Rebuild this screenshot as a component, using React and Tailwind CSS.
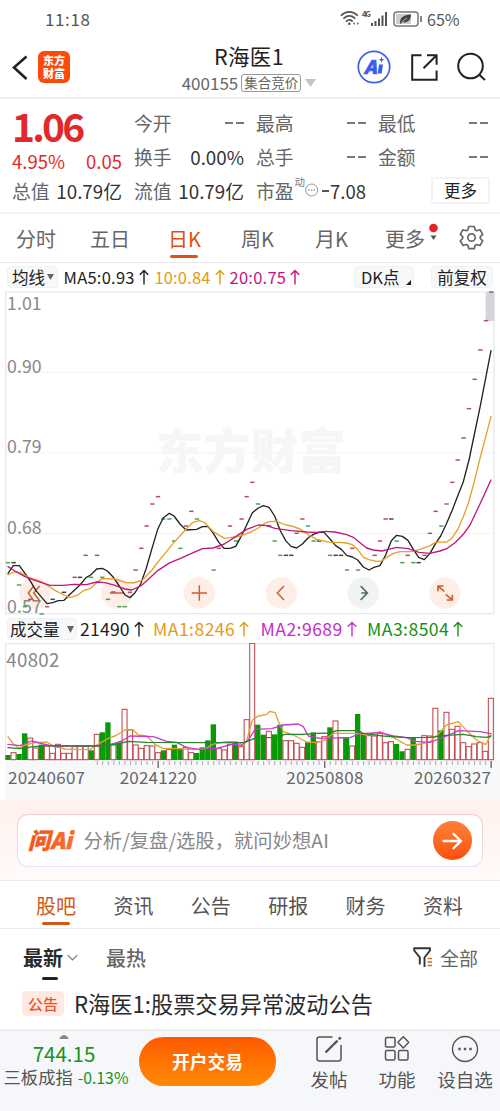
import React from "react";

/* Chart data is expressed in thirds of a pixel: x 0..1500 spans the full width. */
const STEP = 16.65;
const VOLUME =
  "g436 r428 g433 g371 r384 r414 g405 r408 r430 r403 r430 r430 r410 r408 r408 g422 r373 g368 g338 r405 g400 r298 r359 r405 r415 r407 r408 r428 g422 r419 g405 g418 r412 r428 g430 g413 g392 g344 r415 r420 r403 g397 r410 r329 r100 g345 g375 r364 g374 g345 r392 r392 r400 r412 g398 g368 r395 r380 g353 r333 r383 g383 r408 g313 g372 r377 r378 r370 r398 r395 g403 g425 r418 g383 r403 r377 r378 r295 g362 r307 r358 r349 r398 r410 r402 r398 r424 r265"
    .split(" ")
    .map((s) => ({ up: s[0] === "r", top: Number(s.slice(1)) }));

const MA5 =
  "24,280 40,257 58,257 75,280 92,305 108,332 125,352 141,371 158,368 175,362 192,361 210,343 240,315 258,293 272,285 290,267 307,265 322,273 340,292 358,318 375,345 390,353 405,338 422,312 438,267 456,205 473,148 490,113 508,100 522,108 540,132 558,150 590,148 607,140 624,139 640,160 657,188 672,205 690,205 707,199 722,172 740,135 757,98 775,84 790,77 807,82 824,108 840,150 857,182 873,199 890,204 907,192 924,174 940,163 957,157 972,157 990,177 1007,197 1024,208 1040,226 1057,231 1073,240 1090,261 1107,270 1122,262 1140,257 1157,225 1174,182 1190,166 1207,169 1224,181 1240,208 1256,232 1273,239 1290,220 1307,190 1322,168 1340,130 1357,90 1373,48 1390,5 1407,-60 1440,-218 1473,-388";
const MA10 =
  "24,285 40,276 60,277 90,294 108,300 125,306 145,318 165,331 192,345 210,352 230,347 250,332 272,325 290,308 307,296 345,297 375,307 400,309 428,300 456,270 473,247 500,214 522,187 556,150 577,128 598,122 613,127 640,155 673,175 690,173 720,168 750,157 775,144 790,133 807,125 830,124 857,135 875,138 900,147 925,164 950,178 990,187 1020,187 1040,189 1057,194 1073,208 1090,232 1107,239 1130,244 1145,243 1160,232 1180,220 1200,215 1235,215 1260,208 1290,197 1307,187 1340,186 1357,173 1375,145 1390,110 1405,70 1422,8 1440,-65 1473,-190";
const MA20 =
  "24,260 45,273 75,290 105,301 150,316 190,316 220,313 260,314 290,306 315,308 345,316 375,327 395,330 425,316 445,298 473,272 510,248 540,236 575,220 607,206 640,204 673,192 707,170 740,148 775,135 800,137 825,145 873,152 920,156 950,157 975,154 1005,156 1040,164 1060,172 1080,188 1100,204 1120,210 1145,213 1165,208 1190,202 1225,206 1257,217 1290,220 1320,213 1342,205 1365,188 1390,163 1410,135 1440,72 1473,0";
const DASHES =
  "g24,248 d41,248 g57,315 g75,380 g125,402 r91,358 r141,380 d158,358 d192,337 r224,292 d240,292 r257,226 g273,292 r291,226 g307,292 g324,358 r340,336 g358,380 g374,380 r390,337 r407,270 r424,205 r440,138 r457,72 r474,50 g490,117 g508,117 g522,183 g541,205 r558,138 r574,94 g591,117 g641,270 r657,205 r690,138 g708,183 r725,117 r740,50 r757,7 g774,72 d807,138 g824,183 g841,226 d858,226 d874,226 r890,160 r907,117 g924,138 g941,183 d957,183 g990,226 d1007,226 d1023,226 g1041,270 r1057,205 g1074,270 r1124,226 r1140,183 r1157,117 d1174,117 g1190,183 g1207,248 r1223,226 g1240,248 d1256,248 r1274,226 r1290,160 r1307,94 g1324,138 r1340,72 r1357,7 r1373,-60 r1391,-126 r1407,-214 r1424,-302 r1441,-390 r1458,-478 r1474,-564"
    .split(" ")
    .map((s) => {
      const [x, y] = s.slice(1).split(",").map(Number);
      return { c: { g: "#4aa552", r: "#b05060", d: "#444" }[s[0]], x, y };
    });
const VMA1 =
  "24,380 40,402 57,415 75,405 105,398 140,396 165,410 195,417 240,419 272,418 290,405 325,385 345,378 375,360 400,360 415,375 440,378 465,403 490,416 530,415 580,419 615,417 640,402 680,395 710,395 730,405 740,392 757,330 775,318 800,313 810,304 825,308 840,345 850,365 880,375 920,396 950,398 975,390 1000,370 1070,370 1100,375 1140,365 1180,382 1220,405 1250,405 1290,395 1315,372 1340,345 1375,335 1400,362 1430,390 1457,404 1473,375";
const VMA2 =
  "24,403 60,407 95,393 130,402 165,410 230,408 300,408 340,402 365,393 390,378 460,380 500,394 530,397 560,413 600,418 650,415 700,402 725,406 745,390 765,358 815,356 850,345 895,342 910,350 925,378 960,385 1050,383 1080,371 1140,368 1180,378 1220,383 1245,394 1290,397 1340,378 1375,362 1440,365 1473,371";
const VMA3 =
  "24,413 60,416 100,410 150,407 290,408 350,402 385,394 440,397 650,398 730,398 770,383 830,382 855,373 910,373 950,370 990,369 1010,362 1075,362 1090,370 1150,378 1220,383 1290,382 1340,376 1390,373 1430,380 1460,382 1473,378";

function Line({ points, color, w = 4 }) {
  return <polyline points={points} fill="none" stroke={color} strokeWidth={w} strokeLinejoin="round" strokeLinecap="round" />;
}

function StatusBar() {
  return (
    <div className="flex h-[38px] items-center pb-px pl-[45px] pr-[41px] text-[#555]">
      <span className="text-[17px] leading-none tracking-[0.6px]">11:18</span>
      <div className="ml-auto flex items-center">
        <svg width="20" height="17" viewBox="0 0 20 17" fill="none" stroke="#555" strokeWidth="1.8" strokeLinecap="round">
          <path d="M1.5 5.2C6 .8 12.6.8 17.2 5.2M4 8.2c3.2-3 7.500-3 10.700 0M6.500 11.200c1.700-1.600 4-1.600 5.600-.2" />
          <circle cx="9.300" cy="13.800" r="1.300" fill="#555" stroke="none" />
          <path d="M13 13.500l1.700-1.500v3zM19 13.500l-1.700-1.500v3z" fill="#555" stroke="none" />
        </svg>
        <svg className="ml-[2px] overflow-visible" width="26" height="17" viewBox="0 0 26 17" fill="#555">
          <text x="0" y="7" fontSize="8" fontWeight="700" textLength="9">4G</text>
          <path d="M9 13h2v3H9zM12.500 11h2v5h-2zM16 8.500h2V16h-2zM19.500 5.500h2V16h-2zM23 2h2v14h-2z" />
        </svg>
        <svg className="ml-[5px]" width="30" height="16" viewBox="0 0 30 16">
          <rect x="1" y="1" width="24" height="14" rx="3" fill="#fff" stroke="#777" strokeWidth="1.500" />
          <path d="M3 3h15v10H3z" fill="#ccc" />
          <path d="M7 12c0-6 4-8 11-8.500 0 6-4 9-8.500 7.500L7.500 13z" fill="#444" />
          <path d="M9 11l5-4" stroke="#ddd" strokeWidth=".8" />
          <path d="M28 5v6" stroke="#777" strokeWidth="1.800" />
        </svg>
        <span className="ml-[4px] w-[32px] whitespace-nowrap text-[16px] leading-none">65%</span>
      </div>
    </div>
  );
}

function Header() {
  return (
    <div className="flex h-[61px] items-start border-b-2 border-[#efefef] pl-[12px]">
      <svg className="mt-[17px]" width="16" height="25" viewBox="0 0 16 25" fill="none" stroke="#222" strokeWidth="2.600">
        <path d="M14.500 1.500L2 12.500l12.500 11.500" />
      </svg>
      <div className="ml-[10px] mt-[13px] flex h-[32px] w-[32px] flex-col items-center justify-center rounded-[6px] bg-[#fb4a0c] text-[11px] font-black leading-[13.500px] text-white">
        <span>东方</span>
        <span>财富</span>
      </div>
      <div className="ml-[107px] flex w-[144px] flex-col items-center">
        <div className="mt-[6px] whitespace-nowrap text-[21.500px] leading-[24px] tracking-[0.400px] text-[#222]">R海医1</div>
        <div className="mt-[5px] flex items-center whitespace-nowrap leading-none text-[#666]">
          <span className="text-[17px] leading-[20px]">400155</span>
          <span className="ml-[3px] flex h-[18px] items-center rounded-[3px] border border-[#999] px-[2px] text-[13.500px]">集合竞价</span>
          <svg className="ml-[4px]" width="11" height="8" viewBox="0 0 11 8"><path d="M0 0h11L5.500 8z" fill="#c4c4c4" /></svg>
        </div>
      </div>
      <svg className="ml-[36px] mt-[12px]" width="34" height="34" viewBox="0 0 34 34">
        <circle cx="17" cy="17" r="15.700" fill="#fff" stroke="#3f62e0" strokeWidth="1.700" />
        <text x="7" y="23.500" fontSize="18.500" fontWeight="900" fontStyle="italic" fill="#3a5cf0" stroke="#3a5cf0" strokeWidth=".7" fontFamily="Noto Sans CJK SC" textLength="12.500" lengthAdjust="spacingAndGlyphs">A</text>
        <path d="M22 14.500h4l-1.300 9h-4z" fill="#3a5cf0" />
        <path d="M24.500 6.800l.8 2.200 2.200.8-2.200.8-.8 2.200-.8-2.200-2.200-.8 2.200-.8z" fill="#3a5cf0" />
      </svg>
      <svg className="ml-[19px] mt-[15px]" width="29" height="29" viewBox="0 0 29 29" fill="none" stroke="#222" strokeWidth="2">
        <path d="M11.500 2.200H2.200v24.600h24.400V17.500M17 2.200h9.600v9.600M26.600 2.200L13.500 15.300" />
      </svg>
      <svg className="ml-[18px] mt-[14px]" width="30" height="30" viewBox="0 0 30 30" fill="none" stroke="#222" strokeWidth="2">
        <circle cx="13.500" cy="14" r="12.300" />
        <path d="M22 22.500l6 5.500" />
      </svg>
    </div>
  );
}

function Stat({ label, value }) {
  return (
    <div className="flex h-[34px] w-[110px] items-center justify-between whitespace-nowrap text-[18.800px] leading-none">
      <span className="text-[#666]">{label}</span>
      <span className="text-[#333]">{value}</span>
    </div>
  );
}

function Dashes() {
  return <span className="flex gap-[3px]"><i className="h-[2px] w-[8px] bg-[#777]" /><i className="h-[2px] w-[8px] bg-[#777]" /></span>;
}

function Quote() {
  return (
    <div className="flex h-[115px] gap-[12px] border-b-2 border-[#f4f4f4] pl-[12px] pt-[7px] text-[#e2282b]">
      <div className="w-[110px]">
        <div className="-mt-[2px] h-[44px] whitespace-nowrap text-[39px] font-bold leading-[43px] tracking-[-2.800px]">1.06</div>
        <div className="flex h-[26px] items-center justify-between text-[18.500px] leading-none">
          <span>4.95%</span>
          <span>0.05</span>
        </div>
        <Stat label="总值" value="10.79亿" />
      </div>
      <div>
        <Stat label="今开" value={<Dashes />} />
        <Stat label="换手" value="0.00%" />
        <Stat label="流值" value="10.79亿" />
      </div>
      <div>
        <Stat label="最高" value={<Dashes />} />
        <Stat label="总手" value={<Dashes />} />
        <div className="flex h-[34px] w-[110px] items-center whitespace-nowrap text-[18.800px] leading-none">
          <span className="text-[#666]">市盈</span>
          <span className="-mt-[18px] ml-[1px] text-[10.500px] text-[#777]">动</span>
          <svg className="-mt-[3px]" width="14" height="14" viewBox="0 0 14 14">
            <circle cx="7" cy="7" r="6.300" fill="none" stroke="#888" strokeWidth=".9" />
            <path d="M3.500 6.500H5v1.200H3.500zM6.300 6.500h1.500v1.200H6.300zM9 6.500h1.500v1.200H9z" fill="#888" />
          </svg>
          <i className="ml-[4px] h-[2px] w-[7px] bg-[#555]" />
          <span className="ml-[1px] text-[18.500px] text-[#333]">7.08</span>
        </div>
      </div>
      <div>
        <Stat label="最低" value={<Dashes />} />
        <Stat label="金额" value={<Dashes />} />
        <div className="ml-[53px] mt-[3px] flex h-[27px] w-[59px] items-center justify-center rounded-[3px] border-2 border-[#f3f3f3] pb-px text-[16.500px] leading-none text-[#222]">更多</div>
      </div>
    </div>
  );
}

function PeriodTabs() {
  return (
    <div className="flex h-[49px] items-start border-b border-[#e9e9e9] pt-[14px] text-[20px] leading-[21px] text-[#666]">
      <span className="ml-[16px] w-[74px]">分时</span>
      <span className="w-[78px]">五日</span>
      <span className="flex w-[73px] flex-col text-[#d9530f]">
        日K
        <i className="ml-[2px] mt-[6px] h-[3px] w-[28px] rounded-full bg-[#d9530f]" />
      </span>
      <span className="w-[74px]">周K</span>
      <span className="w-[70px]">月K</span>
      <span className="flex w-[74px]">
        更多
        <svg className="-mt-[5px] ml-[3px]" width="11" height="20" viewBox="0 0 11 20">
          <circle cx="5.500" cy="5" r="4.300" fill="#e5251d" />
          <path d="M2.500 12.500h6L5.500 17z" fill="#555" />
        </svg>
      </span>
      <svg className="-mt-[3px]" width="25" height="25" viewBox="0 0 25 25" fill="none" stroke="#666" strokeWidth="1.700" strokeLinejoin="round">
        <path d="M9.800 1.500h5.400l.9 3.300 1.600.9 3.300-1 2.700 4.700-2.400 2.300v1.800l2.400 2.300-2.700 4.700-3.300-1-1.600.9-.9 3.300H9.800l-.9-3.300-1.600-.9-3.300 1-2.700-4.700 2.400-2.300v-1.800L1.300 9.400 4 4.700l3.300 1 1.600-.9z" />
        <circle cx="12.500" cy="12.500" r="3.700" />
      </svg>
    </div>
  );
}

function Up({ color }) {
  return (
    <svg className="ml-[4px] shrink-0" width="10" height="16" viewBox="0 0 10 16" fill="none" stroke={color} strokeWidth="1.400">
      <path d="M5 15.500V1.500M.8 5.700L5 1.500l4.200 4.200" />
    </svg>
  );
}

function MaRow() {
  return (
    <div className="flex h-[28px] items-center whitespace-nowrap pl-[7px] pr-[7px] text-[16.500px] leading-none text-[#222]">
      <span className="flex h-[22px] w-[51px] items-center rounded-[4px] border border-[#f0f1f4] bg-[#f7f8fa] pl-[4px]">
        均线
        <svg className="ml-[2px]" width="7" height="6" viewBox="0 0 7 6"><path d="M0 0h7L3.500 6z" fill="#666" /></svg>
      </span>
      <span className="ml-[5.500px] flex w-[91px] items-center tracking-[0.250px]">MA5:0.93<Up color="#222" /></span>
      <span className="flex w-[75px] items-center tracking-[0.150px] text-[#e69a17]">10:0.84<Up color="#e69a17" /></span>
      <span className="flex items-center tracking-[0.250px] text-[#c41580]">20:0.75<Up color="#c41580" /></span>
      <span className="ml-auto flex h-[22px] w-[60px] items-center rounded-[4px] border border-[#f0f1f4] bg-[#f7f8fa] pl-[6px]">
        DK点
        <svg className="ml-[6px] mt-[10px]" width="5" height="5" viewBox="0 0 5 5"><path d="M5 0v5H0z" fill="#222" /></svg>
      </span>
      <span className="ml-[17px] flex h-[22px] w-[62px] items-center justify-center rounded-[4px] border border-[#f0f1f4] bg-[#f7f8fa]">前复权</span>
    </div>
  );
}

function PriceChart() {
  const labels = [["1.01", 929], ["0.90", 1119], ["0.79", 1360], ["0.68", 1603], ["0.57", 1840]];
  const circles = [104, 350, 598, 844, 1090, 1335];
  return (
    <svg className="block shrink-0 overflow-visible" width="500" height="325" viewBox="0 873 1500 975">
      <g fill="none" stroke="#e6e8eb" strokeWidth="4">
        <path d="M17 875.500h1465M1482 875v966" />
        <path d="M17 875v966h1465" />
      </g>
      <path d="M17 1117h1465M17 1358.500h1465M17 1600h1465" stroke="#f2f2f2" strokeWidth="3" />
      <text x="468" y="1408" fontSize="142" fontWeight="900" fill="#f6f6f6" textLength="568">东方财富</text>
      <rect x="1457" y="876" width="26" height="87" fill="#d3d5da" />
      {circles.map((c, i) => (
        <circle key={c} cx={c} cy="1779" r="47" fill={i === 4 ? "#f1f2f2" : "#fdeee8"} />
      ))}
      <g fontSize="53" fill="#888">
        {labels.map(([t, y]) => (
          <text key={t} x="21" y={y} textLength="104">{t}</text>
        ))}
      </g>
      <g transform="translate(0 1440)">
        <g fill="none" stroke="#c9622d" strokeWidth="4.500">
          <path d="M101 318l-16 21 16 23M119 318l-18 21 18 23" />
          <path d="M329 339h44M575 339h46M598 316v46" />
          <path d="M852 318l-20 21 20 21" />
          <path d="M1314 334v-16h17M1315 319l18 15M1340 360h17v-16M1356 359l-19-16" strokeWidth="5" />
        </g>
        <path d="M1082 318l20 21-20 21M1084 339h17" fill="none" stroke="#4f6b62" strokeWidth="5" />
        {DASHES.map((d, i) => (
          <path key={i} d={`M${d.x - 6.5} ${d.y}h13`} stroke={d.c} strokeWidth="4.500" />
        ))}
        <Line points={MA5} color="#222" />
        <Line points={MA10} color="#e5a02a" />
        <Line points={MA20} color="#c0187c" />
      </g>
    </svg>
  );
}

function VolumeRow() {
  return (
    <div className="flex h-[27px] items-center whitespace-nowrap pb-px pl-[7px] text-[17.600px] leading-none">
      <span className="flex h-[22px] w-[70px] items-center rounded-[4px] border border-[#f0f1f4] bg-[#f7f8fa] pl-[2px] text-[16.500px] text-[#222]">
        成交量
        <svg className="ml-[7px]" width="7" height="7" viewBox="0 0 7 7"><path d="M0 0h7L3.500 7z" fill="#666" /></svg>
      </span>
      <span className="ml-[3px] flex w-[73px] items-center tracking-[0.200px] text-[#222]">21490<Up color="#222" /></span>
      <span className="flex w-[107.500px] items-center tracking-[0.450px] text-[#e69a17]">MA1:8246<Up color="#e69a17" /></span>
      <span className="flex w-[106.500px] items-center tracking-[0.450px] text-[#bf30cc]">MA2:9689<Up color="#bf30cc" /></span>
      <span className="flex items-center tracking-[0.450px] text-[#169016]">MA3:8504<Up color="#169016" /></span>
    </div>
  );
}

function VolumeChart() {
  return (
    <svg className="block shrink-0" width="500" height="157" viewBox="0 99 1500 471">
      <rect x="15" y="449" width="1485" height="121" fill="#f7f8fa" />
      <path d="M17 449V101h1465v348" fill="none" stroke="#e2e4e7" strokeWidth="3" />
      <text x="19" y="171" fontSize="56" fill="#888" textLength="159">40802</text>
      {VOLUME.map((b, i) => {
        const x = 24 + STEP * i;
        return b.up ? (
          <rect key={i} x={x - 7.5} y={b.top} width="15" height={449 - b.top} fill="#fff" stroke="#c44a4e" strokeWidth="3.200" />
        ) : (
          <rect key={i} x={x - 8} y={b.top - 1} width="16" height={451 - b.top} fill="#089808" />
        );
      })}
      {VOLUME.map((b, i) => {
        const major = i === 27 || i === 57 || i === 87;
        return i >= 16 ? (
          <path key={i} d={`M${25 + STEP * i} 453v${major ? 21 : 12}`} stroke={major ? "#666" : "#999"} strokeWidth={major ? 4 : 2.5} />
        ) : null;
      })}
      <Line points={VMA1} color="#e5a033" />
      <Line points={VMA2} color="#c43cd0" />
      <Line points={VMA3} color="#26862c" />
      <g fontSize="51" fill="#666">
        <text x="24" y="521" textLength="231">20240607</text>
        <text x="359" y="521" textLength="231">20241220</text>
        <text x="859" y="521" textLength="231">20250808</text>
        <text x="1242" y="521" textLength="231">20260327</text>
      </g>
    </svg>
  );
}

function AskBar() {
  return (
    <div className="h-[81px] border-b border-[#e9e9ee] bg-linear-to-b from-[#fff1ec] to-[#fffafa] px-[17px] pt-[14px]">
      <div className="rounded-[11px] bg-linear-to-b from-[#f6cdc8] to-[#e4e4f2] p-px">
        <div className="flex h-[51px] items-center rounded-[10px] bg-white pl-[9px] pr-[10px]">
          <svg className="overflow-visible" width="46" height="26" viewBox="0 0 46 26">
            <defs>
              <linearGradient id="ask" x1="0" y1="0" x2="1" y2="0">
                <stop offset="0" stopColor="#f4511a" />
                <stop offset="1" stopColor="#fb7030" />
              </linearGradient>
            </defs>
            <text x="1" y="21" fontSize="22.500" fontWeight="900" fontStyle="italic" fill="url(#ask)" stroke="#f65a20" strokeWidth=".5" textLength="44" lengthAdjust="spacingAndGlyphs">问Ai</text>
          </svg>
          <span className="ml-[10.500px] whitespace-nowrap text-[19.300px] leading-none tracking-[0.050px] text-[#888]">分析/复盘/选股，就问妙想AI</span>
          <span className="ml-auto flex h-[39px] w-[39px] items-center justify-center rounded-full bg-linear-to-b from-[#fb8237] to-[#fb4e06]">
            <svg width="21" height="18" viewBox="0 0 21 18" fill="none" stroke="#fff" strokeWidth="2.400" strokeLinecap="round" strokeLinejoin="round">
              <path d="M1.500 9h17.500M11.500 1.800L19 9l-7.500 7.200" />
            </svg>
          </span>
        </div>
      </div>
    </div>
  );
}

function InfoTabs() {
  return (
    <div className="flex h-[48px] gap-[37.400px] border-b border-[#ececec] pl-[36px] pt-[15px] text-[20px] leading-[20px] text-[#555]">
      {["股吧", "资讯", "公告", "研报", "财务", "资料"].map((t, i) =>
        i === 0 ? (
          <span key={t} className="flex flex-col items-center text-[#cf5a18]">
            {t}
            <i className="mt-[6px] h-[3px] w-[28px] rounded-full bg-[#cf5a18]" />
          </span>
        ) : (
          <span key={t}>{t}</span>
        )
      )}
    </div>
  );
}

function Feed() {
  return (
    <div className="h-[100px] pt-[19px]">
      <div className="flex h-[38px] items-start text-[20px] leading-[20px]">
        <span className="ml-[23px] font-bold text-[#2a2a2a]">
          最新
          <i className="ml-[19px] mt-[9px] block h-[3px] w-[16px] rounded-full bg-[#222]" />
        </span>
        <svg className="ml-[4px] mt-[6px]" width="11" height="8" viewBox="0 0 11 8" fill="none" stroke="#777" strokeWidth="1.200"><path d="M.8 1.200L5.500 6l4.700-4.800" /></svg>
        <span className="ml-[28px] font-medium text-[#666]">最热</span>
        <svg className="-mt-px ml-auto" width="20" height="21" viewBox="0 0 20 21" fill="none">
          <path d="M11.500 20V10.500L17 3.500V1.300H1.200v2.200l5.600 6.800v7.200" stroke="#333" strokeWidth="1.900" strokeLinejoin="round" />
          <path d="M14.500 11.500H19M14.500 15H19M14.500 18.500H19" stroke="#e06a20" strokeWidth="1.500" />
        </svg>
        <span className="ml-[7px] mr-[22px] text-[19px] text-[#666]">全部</span>
      </div>
      <div className="mt-[5px] flex h-[25px] items-center whitespace-nowrap">
        <span className="ml-[22px] flex h-[25px] w-[42px] items-center justify-center rounded-[4px] bg-[#fee9e3] text-[15px] font-medium leading-none text-[#ee5525]">公告</span>
        <span className="ml-[10px] text-[22.200px] leading-none text-[#2a2a2a]">R海医1:股票交易异常波动公告</span>
      </div>
    </div>
  );
}

function BottomBar() {
  return (
    <div className="flex h-[82px] items-start border-t-2 border-[#eceef0] bg-[#f5f7fa] text-[18.500px] leading-none text-[#555]">
      <div className="flex w-[128px] flex-col items-center pt-[4px]">
        <svg className="shrink-0" width="10" height="4" viewBox="0 0 10 4"><path d="M0 4q5-8 10 0z" fill="#888" /></svg>
        <span className="mt-[4px] text-[20.500px] leading-[20px] text-[#18941c]">744.15</span>
        <span className="ml-[4px] mt-[4px] flex items-baseline gap-[5px] whitespace-nowrap text-[17.300px] leading-[19px]">三板成指 <b className="text-[15.800px] font-normal text-[#18941c]">-0.13%</b></span>
      </div>
      <div className="ml-[11px] mt-[6px] flex h-[49px] w-[137px] items-center justify-center rounded-full bg-linear-to-b from-[#fd5900] to-[#ff8a06] text-[17.700px] font-bold text-white">开户交易</div>
      <div className="ml-[33px] flex w-[40px] flex-col items-center pt-[4px]">
        <svg width="28" height="28" viewBox="0 0 28 28" fill="none" stroke="#555" strokeWidth="1.500">
          <path d="M17.500 2H4.500Q2 2 2 4.500v19Q2 26 4.500 26h19q2.500 0 2.500-2.500V10" />
          <path d="M10.500 17.500L22.500 5.700M23.800 4.300l2-2" strokeWidth="2.400" />
        </svg>
        <span className="mt-[7px] whitespace-nowrap">发帖</span>
      </div>
      <div className="ml-[28px] flex w-[40px] flex-col items-center pt-[4px]">
        <svg width="28" height="28" viewBox="0 0 28 28" fill="none" stroke="#555" strokeWidth="1.500" strokeLinejoin="round">
          <rect x="2.500" y="2.500" width="9.500" height="9.500" rx="1.500" />
          <rect x="2.500" y="15.500" width="9.500" height="9.500" rx="1.500" />
          <rect x="15.500" y="15.500" width="9.500" height="9.500" rx="1.500" />
          <path d="M20.300 1.700l5.400 5.600-5.400 5.600-5.400-5.600z" />
        </svg>
        <span className="mt-[7px] whitespace-nowrap">功能</span>
      </div>
      <div className="ml-[18px] flex w-[60px] flex-col items-center pt-[4px]">
        <svg width="28" height="28" viewBox="0 0 28 28" fill="none" stroke="#555" strokeWidth="1.400">
          <circle cx="14" cy="14" r="12.500" />
          <path d="M7.300 14h2.400M12.800 14h2.400M18.300 14h2.400" strokeWidth="2.300" />
        </svg>
        <span className="mt-[7px] whitespace-nowrap">设自选</span>
      </div>
    </div>
  );
}

export default function App() {
  return (
    <div className="flex h-[1111px] w-[500px] flex-col overflow-hidden bg-white font-['Noto_Sans_CJK_SC',sans-serif] *:shrink-0">
      <StatusBar />
      <Header />
      <Quote />
      <PeriodTabs />
      <MaRow />
      <PriceChart />
      <VolumeRow />
      <VolumeChart />
      <AskBar />
      <InfoTabs />
      <Feed />
      <BottomBar />
    </div>
  );
}
